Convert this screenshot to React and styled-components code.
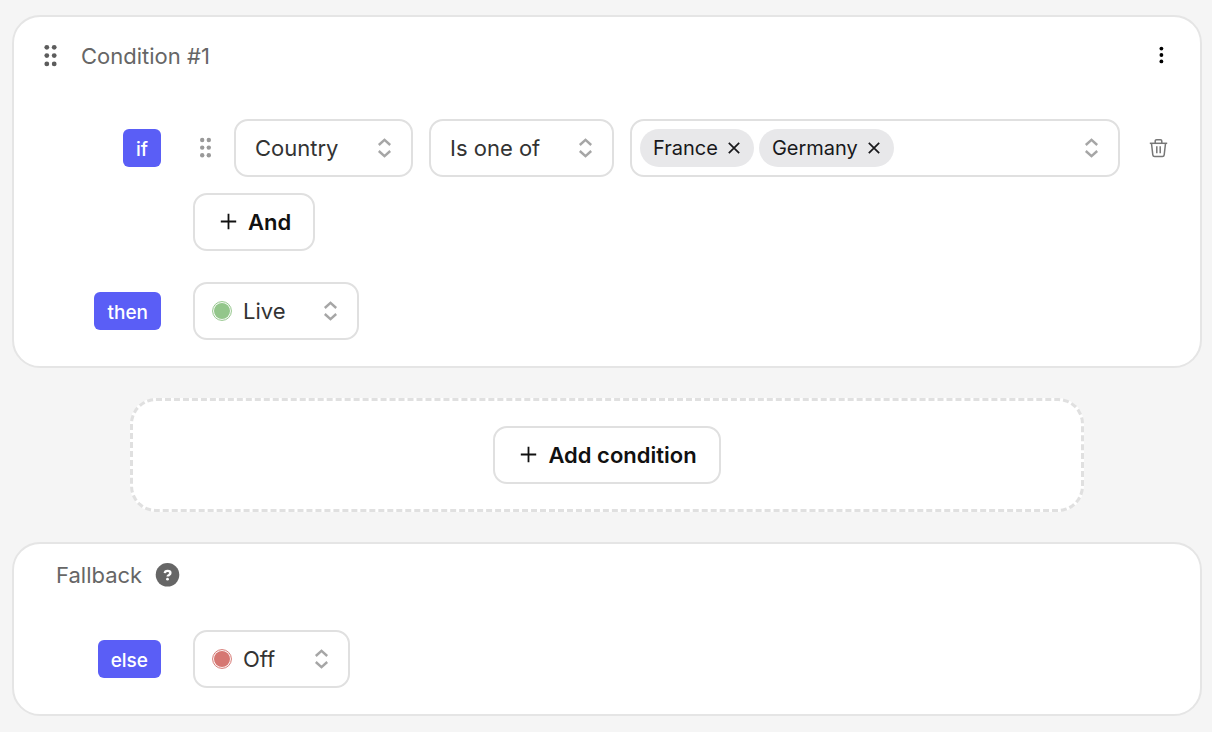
import React, { useState } from "react";
import styled, { createGlobalStyle } from "styled-components";

const GlobalStyle = createGlobalStyle`
  *, *::before, *::after { box-sizing: border-box; }
  body {
    margin: 0;
    background: #f5f5f5;
    font-family: Inter, "Liberation Sans", sans-serif;
    font-size: 22px;
    line-height: 28px;
    color: #333333;
  }
  button, input, select { font: inherit; color: inherit; margin: 0; }
  h2 { margin: 0; font: inherit; }
`;

const Page = styled.main`
  display: flex;
  flex-direction: column;
  gap: 30px;
  padding: 15px 10px 16px 12px;
`;

const Card = styled.section`
  background: #ffffff;
  border: 2px solid #e5e5e5;
  border-radius: 28px;
`;

const CardHeader = styled.header`
  display: flex;
  align-items: center;
  gap: ${(p) => p.$gap}px;
  height: ${(p) => p.$height}px;
  padding: 0 19px 0 ${(p) => p.$inset}px;
  color: #666666;
`;

const Spacer = styled.div`
  flex: 1;
`;

const CardBody = styled.div`
  display: flex;
  flex-direction: column;
  gap: 31px;
  padding: 24px 19px 26px 0;
`;

const Clause = styled.div`
  display: grid;
  grid-template-columns: 147px minmax(0, 1fr);
  column-gap: 32px;
  align-items: start;
`;

const KeywordCell = styled.div`
  display: flex;
  align-items: center;
  justify-content: flex-end;
  height: 58px;
`;

const Keyword = styled.span`
  height: 38px;
  padding: 2px 13px 0;
  border-radius: 6px;
  background: #5a5ef6;
  color: #ffffff;
  font-size: 19px;
  font-weight: 500;
  line-height: 38px;
`;

const Stack = styled.div`
  display: flex;
  flex-direction: column;
  align-items: flex-start;
  gap: 16px;
`;

const RuleRow = styled.div`
  display: flex;
  align-items: center;
  gap: 16px;
  width: 100%;
`;

const IconButton = styled.button`
  display: flex;
  align-items: center;
  justify-content: center;
  width: ${(p) => p.$width}px;
  height: 38px;
  padding: 0;
  border: 0;
  background: none;
  color: ${(p) => p.$color};
  cursor: pointer;
`;

const Field = styled.div`
  position: relative;
  display: flex;
  align-items: center;
  flex: ${(p) => (p.$width ? `0 0 ${p.$width}px` : "1")};
  width: ${(p) => (p.$width ? `${p.$width}px` : "auto")};
  min-width: 0;
  height: 58px;
  border: 2px solid #e0e0e0;
  border-radius: 14px;
  background: #ffffff;
`;

const NativeSelect = styled.select`
  flex: 1;
  min-width: 0;
  height: 100%;
  padding: 0 44px 0 ${(p) => p.$inset}px;
  border: 0;
  border-radius: 12px;
  background: none;
  appearance: none;
  cursor: pointer;
`;

const FieldArrows = styled.svg`
  position: absolute;
  right: 18px;
  top: 17px;
  pointer-events: none;
`;

const StatusDot = styled.svg`
  flex: none;
  margin-left: 17px;
`;

const Chips = styled.ul`
  display: flex;
  gap: 5px;
  margin: 0;
  padding: 0 0 0 8px;
  list-style: none;
`;

const Chip = styled.li`
  display: flex;
  align-items: center;
  gap: 6px;
  height: 38px;
  padding: 0 9px 0 13px;
  border-radius: 19px;
  background: #e8e8ea;
  color: #18181b;
  font-size: 20px;
`;

const ChipRemove = styled.button`
  display: flex;
  align-items: center;
  justify-content: center;
  width: 21px;
  height: 24px;
  padding: 0;
  border: 0;
  background: none;
  cursor: pointer;
`;

const ChipInput = styled.input`
  flex: 1;
  min-width: 0;
  height: 100%;
  padding: 0 44px 0 8px;
  border: 0;
  outline: 0;
  background: none;
`;

const OutlineButton = styled.button`
  display: flex;
  align-items: center;
  gap: 10px;
  height: 58px;
  padding: 0 22px 0 25px;
  border: 2px solid #e0e0e0;
  border-radius: 14px;
  background: #ffffff;
  color: #111111;
  font-weight: 600;
  cursor: pointer;
`;

const AddArea = styled.div`
  display: flex;
  justify-content: center;
  margin: 0 118px;
  padding: 25px;
  border: 3px dashed #e0e0e0;
  border-radius: 26px;
  background: #ffffff;
`;

function Grip({ width, height, r, dx, dy }) {
  return (
    <svg width={width} height={height} fill="currentColor" aria-hidden="true">
      {[-dy, 0, dy].map((y) =>
        [-dx, dx].map((x) => (
          <circle key={`${x},${y}`} cx={width / 2 + x} cy={height / 2 + y - 0.4} r={r} />
        ))
      )}
    </svg>
  );
}

function Kebab() {
  return (
    <svg width="6" height="20" fill="#000000" aria-hidden="true">
      <circle cx="3.4" cy="2.6" r="1.9" />
      <circle cx="3.4" cy="9" r="1.9" />
      <circle cx="3.4" cy="15.4" r="1.9" />
    </svg>
  );
}

function Arrows() {
  return (
    <FieldArrows width="18" height="20" viewBox="0 0 18 20" fill="none" stroke="#a6a6a6" strokeWidth="2.4" aria-hidden="true">
      <path d="M3.8 7 9.5 1.8 15.2 7" />
      <path d="M3.8 13 9.5 18.2 15.2 13" />
    </FieldArrows>
  );
}

function Plus() {
  return (
    <svg width="18" height="18" viewBox="0 0 18 18" stroke="currentColor" strokeWidth="1.8" aria-hidden="true">
      <path d="M8.5 .8v15.4M.8 8.5h15.4" />
    </svg>
  );
}

function Cross() {
  return (
    <svg width="12" height="12" viewBox="0 0 12 12" stroke="#18181b" strokeWidth="1.7" aria-hidden="true">
      <path d="M.8.8l10.4 10.4M11.2.8.8 11.2" />
    </svg>
  );
}

function Trash() {
  return (
    <svg width="20" height="20" viewBox="0 0 20 20" fill="none" stroke="currentColor" strokeWidth="1.5" strokeLinejoin="round" aria-hidden="true">
      <path d="M.8 5.3h17.4" />
      <path d="M6.2 5V3.1q0-1.4 1.4-1.4h3.8q1.4 0 1.4 1.4V5" />
      <path d="M2.5 5.5l1.3 11.3q.2 1.6 1.8 1.6h7.8q1.6 0 1.8-1.6l1.3-11.3" />
      <path d="M7.8 8.2v7M11.2 8.2v7" />
    </svg>
  );
}

function Help() {
  return (
    <svg width="25" height="25" viewBox="0 0 25 25" aria-hidden="true">
      <circle cx="12.5" cy="11.8" r="11.8" fill="#666666" />
      <path d="M9.8 10.2c.1-1.5 1.2-2.3 2.8-2.3s2.8.9 2.8 2.1c0 1.1-.7 1.6-1.5 2.1-.8.4-1.3.7-1.3 1.5" fill="none" stroke="#ffffff" strokeWidth="2.4" />
      <circle cx="12.5" cy="16.2" r="1.4" fill="#ffffff" />
    </svg>
  );
}

function SelectField({ label, options, width, dot }) {
  return (
    <Field $width={width}>
      {dot && (
        <StatusDot width="20" height="20" aria-hidden="true">
          <circle cx="10" cy="10" r="9.4" fill="none" stroke={dot} strokeWidth="1" />
          <circle cx="10" cy="10" r="8" fill={dot} />
        </StatusDot>
      )}
      <NativeSelect aria-label={label} $inset={dot ? 11 : 19}>
        {options.map((o) => (
          <option key={o}>{o}</option>
        ))}
      </NativeSelect>
      <Arrows />
    </Field>
  );
}

function CountryPicker() {
  const [values, setValues] = useState(["France", "Germany"]);
  return (
    <Field>
      <Chips>
        {values.map((v) => (
          <Chip key={v}>
            {v}
            <ChipRemove
              type="button"
              aria-label={`Remove ${v}`}
              onClick={() => setValues(values.filter((x) => x !== v))}
            >
              <Cross />
            </ChipRemove>
          </Chip>
        ))}
      </Chips>
      <ChipInput type="text" aria-label="Countries" />
      <Arrows />
    </Field>
  );
}

export default function App() {
  return (
    <>
      <GlobalStyle />
      <Page>
        <Card>
          <CardHeader $height={78} $inset={30} $gap={24}>
            <IconButton type="button" aria-label="Move condition" $width={13} $color="#5c5c5c">
              <Grip width={13} height={24} r={2.4} dx={3.7} dy={8.3} />
            </IconButton>
            <h2>Condition #1</h2>
            <Spacer />
            <IconButton type="button" aria-label="Condition options" $width={40} $color="#000000">
              <Kebab />
            </IconButton>
          </CardHeader>
          <CardBody>
            <Clause>
              <KeywordCell>
                <Keyword>if</Keyword>
              </KeywordCell>
              <Stack>
                <RuleRow>
                  <IconButton type="button" aria-label="Move rule" $width={25} $color="#999999">
                    <Grip width={13} height={22} r={2.2} dx={3.3} dy={7.6} />
                  </IconButton>
                  <SelectField label="Attribute" options={["Country", "Language"]} width={179} />
                  <SelectField label="Operator" options={["Is one of", "Is not one of"]} width={185} />
                  <CountryPicker />
                  <IconButton type="button" aria-label="Delete rule" $width={45} $color="#777777">
                    <Trash />
                  </IconButton>
                </RuleRow>
                <OutlineButton type="button">
                  <Plus />
                  And
                </OutlineButton>
              </Stack>
            </Clause>
            <Clause>
              <KeywordCell>
                <Keyword>then</Keyword>
              </KeywordCell>
              <SelectField label="Then serve" options={["Live", "Off"]} width={166} dot="#93c68b" />
            </Clause>
          </CardBody>
        </Card>

        <AddArea>
          <OutlineButton type="button">
            <Plus />
            Add condition
          </OutlineButton>
        </AddArea>

        <Card>
          <CardHeader $height={62} $inset={42} $gap={13}>
            <h2>Fallback</h2>
            <IconButton type="button" aria-label="About the fallback" $width={25} $color="#666666">
              <Help />
            </IconButton>
          </CardHeader>
          <CardBody>
            <Clause>
              <KeywordCell>
                <Keyword>else</Keyword>
              </KeywordCell>
              <SelectField label="Else serve" options={["Off", "Live"]} width={157} dot="#d67772" />
            </Clause>
          </CardBody>
        </Card>
      </Page>
    </>
  );
}
